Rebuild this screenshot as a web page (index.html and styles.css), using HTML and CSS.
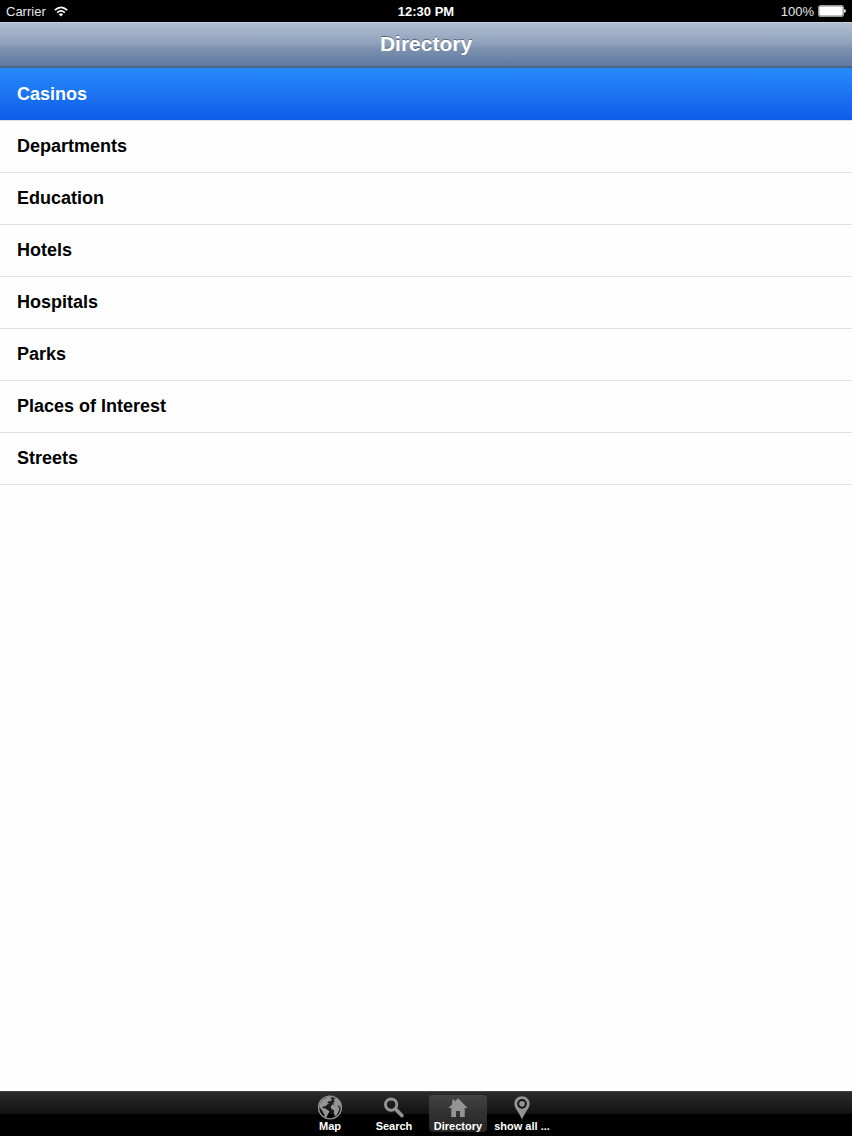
FILE: index.html
```html
<!doctype html>
<html lang="en">
<head>
  <meta charset="UTF-8" />
  <meta name="viewport" content="width=device-width, initial-scale=1.0" />
  <title>Directory</title>
  <link rel="stylesheet" href="styles.css">
</head>
<body>

  <div class="status-bar">
    <div class="carrier">
      <span>Carrier</span>
      <svg class="wifi" viewBox="0 0 14 11" aria-hidden="true">
        <path d="M0.8 4.2Q7-1.4 13.2 4.2M3.2 6.6Q7 3.1 10.8 6.6" fill="none" stroke="#fff" stroke-width="1.7" />
        <path d="M4.8 8.2Q7 6.4 9.2 8.2L7 10.6Z" fill="#fff" />
      </svg>
    </div>
    <div class="time">12:30 PM</div>
    <div class="power">
      <span>100%</span>
      <svg class="battery" viewBox="0 0 28 12" aria-hidden="true">
        <rect x="0.5" y="0.5" width="25" height="11" rx="1.5" fill="#000" stroke="#999" />
        <rect x="1.2" y="1.2" width="23.6" height="9.6" rx="1" fill="#fff" />
        <path d="M26 4q2 0.4 2 2t-2 2z" fill="#ddd" />
      </svg>
    </div>
  </div>

  <header class="nav-bar">
    <h1>Directory</h1>
  </header>

  <main>
    <ul class="list">
      <li><a class="row selected" href="#casinos">Casinos</a></li>
      <li><a class="row" href="#departments">Departments</a></li>
      <li><a class="row" href="#education">Education</a></li>
      <li><a class="row" href="#hotels">Hotels</a></li>
      <li><a class="row" href="#hospitals">Hospitals</a></li>
      <li><a class="row" href="#parks">Parks</a></li>
      <li><a class="row" href="#places">Places of Interest</a></li>
      <li><a class="row" href="#streets">Streets</a></li>
    </ul>
  </main>

  <nav class="tab-bar">
    <button class="tab" type="button">
      <svg viewBox="0.5 0.5 25 25" aria-hidden="true">
        <circle cx="13" cy="13" r="11.4" fill="none" stroke="#949494" stroke-width="1.4" />
        <path d="M3 9L6 5L11 2.2L15 2.6L13.5 4.2L15 5.2L13 7L11.3 6.5L10.5 8L12 9.2L9.5 10.4L8.2 12L6 11.8L5.6 13.6L8.4 14L11 15.8L12.6 17L11 19.5L9.6 22.4L8 23L7 19.5L5.4 16.5L3.6 14L2.2 12Z" fill="#949494" />
        <path d="M17.3 4L20.5 4.4L23.4 9L24 13L22.6 12.6L21.8 10.5L20.8 11.8L22.6 14L21.2 17.8L19.4 21L17.8 21.4L16.8 18.2L17 15.8L14.6 14.8L13.6 12.4L15 10.2L17.4 9.8L16 8.5L18 6.8L16.8 5.6Z" fill="#949494" />
      </svg>
      <span>Map</span>
    </button>
    <button class="tab" type="button">
      <svg viewBox="0 0 26 26" aria-hidden="true">
        <circle cx="10" cy="10" r="5.9" fill="none" stroke="#949494" stroke-width="3" />
        <path d="M14.8 14.8L21.2 21.4" fill="none" stroke="#949494" stroke-width="3.8" stroke-linecap="round" />
      </svg>
      <span>Search</span>
    </button>
    <button class="tab active" type="button">
      <svg viewBox="0 0 26 26" aria-hidden="true">
        <path d="M13 3.4L23 13.6H20V23H15V16.6H11V23H6V13.6H3L7 9.5V4.9H9.6V6.9Z" fill="#949494" />
      </svg>
      <span>Directory</span>
    </button>
    <button class="tab" type="button">
      <svg viewBox="0 0 26 26" aria-hidden="true">
        <path d="M13 1.4C8.5 1.4 5 4.9 5 9.2C5 13.8 10.5 18.7 13 25.8C15.5 18.7 21 13.8 21 9.2C21 4.9 17.5 1.4 13 1.4Z" fill="#949494" />
        <circle cx="13" cy="9.2" r="4" fill="none" stroke="#111" stroke-width="2" />
      </svg>
      <span>show all ...</span>
    </button>
  </nav>

</body>
</html>
```

FILE: styles.css
```css
* {
  box-sizing: border-box;
}

body {
  margin: 0;
  min-height: 100vh;
  display: flex;
  flex-direction: column;
  background: #fefefe;
  color: #000;
  font-family: "Liberation Sans", Arial, sans-serif;
}

/* status bar */
.status-bar {
  display: grid;
  grid-template-columns: 1fr auto 1fr;
  align-items: center;
  height: 22px;
  padding: 0 6px;
  background: #000;
  color: #e8e8e8;
  font-size: 13px;
}

.carrier, .power {
  display: flex;
  align-items: center;
  gap: 8px;
}

.power {
  justify-content: flex-end;
  gap: 4px;
}

.time {
  color: #fff;
  font-weight: bold;
}

.wifi {
  width: 14px;
  height: 11px;
}

.battery {
  width: 28px;
  height: 12px;
}

/* title */
.nav-bar {
  height: 46px;
  border-top: 1px solid #c6d0df;
  border-bottom: 2px solid #486786;
  background: linear-gradient(#b2bfd2, #8c9fba 50%, #7d92b0 60%, #6079a0);
}

.nav-bar h1 {
  margin: 0;
  color: #fff;
  font-size: 21px;
  font-weight: bold;
  line-height: 42px;
  text-align: center;
  text-shadow: 0 -1px 0 rgba(0, 0, 0, 0.4);
}

/* categories */
main {
  flex: 1;
}

.list {
  margin: 0;
  padding: 0;
  border-bottom: 1px solid #e2e2e4;
  list-style: none;
}

.row {
  display: block;
  height: 52px;
  padding: 0 17px;
  border-top: 1px solid #e2e2e4;
  color: #000;
  font-size: 18px;
  font-weight: bold;
  line-height: 50px;
  text-decoration: none;
}

.row.selected {
  border-top-color: #268afa;
  background: linear-gradient(#268afa, #105ce9);
  color: #fff;
}

/* bottom tabs */
.tab-bar {
  display: flex;
  justify-content: center;
  gap: 6px;
  height: 45px;
  padding: 3px 0 4px;
  border-top: 1px solid #444;
  background: linear-gradient(#2b2b2b, #121212 50%, #000 50%);
}

.tab {
  display: flex;
  flex-direction: column;
  align-items: center;
  width: 58px;
  padding: 0;
  border: 0;
  border-radius: 4px;
  background: none;
  color: #fff;
  font-family: inherit;
  font-size: 11px;
  font-weight: bold;
  line-height: 12px;
  white-space: nowrap;
}

.tab svg {
  width: 26px;
  height: 26px;
}

.tab.active {
  background: linear-gradient(#444, #303030 50%, #262626);
}
```
